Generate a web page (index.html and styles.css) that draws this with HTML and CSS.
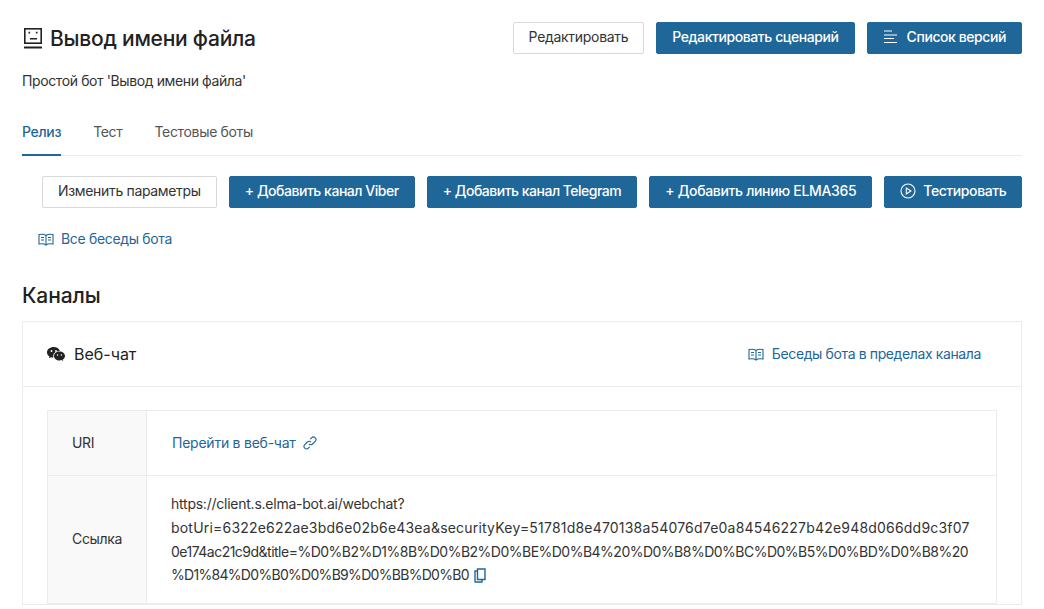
FILE: index.html
```html
<!DOCTYPE html>
<html lang="ru">
<head>
<meta charset="utf-8">
<title>Вывод имени файла</title>
<link rel="stylesheet" href="styles.css">
</head>
<body>
<main class="page">
  <header class="head">
    <h1 class="title">
      <svg class="bot" width="20" height="22" viewBox="0 0 20 22" fill="none" stroke="#222" stroke-width="1.6">
        <rect x="2.800" y="1.800" width="16.400" height="14.400"/>
        <path d="M2 20.500h18" stroke-width="2"/>
        <path d="M7.300 4.800v1.800M14.700 4.800v1.800M8 11.700h7" stroke-width="1.600"/>
      </svg>
      Вывод имени файла
    </h1>
    <div class="head-actions">
      <button class="btn btn-light ls-a">Редактировать</button>
      <button class="btn btn-blue ls-b">Редактировать сценарий</button>
      <button class="btn btn-blue ls-b">
        <svg class="ic" width="15" height="14" viewBox="0 0 15 14" stroke="#fff" stroke-width="1.100" fill="none"><path d="M1 1h8M1 5h13M1 8.500h10M1 12.500h13"/></svg>
        Список версий
      </button>
    </div>
  </header>
  <p class="desc">Простой бот 'Вывод имени файла'</p>
  <nav class="tabs">
    <a class="tab active">Релиз</a>
    <a class="tab">Тест</a>
    <a class="tab">Тестовые боты</a>
  </nav>
  <div class="actions">
    <button class="btn btn-light ls-c">Изменить параметры</button>
    <button class="btn btn-blue ls-d">+ Добавить канал Viber</button>
    <button class="btn btn-blue ls-e">+ Добавить канал Telegram</button>
    <button class="btn btn-blue ls-c">+ Добавить линию ELMA365</button>
    <button class="btn btn-blue ls-b tight">
      <svg class="ic" width="16" height="16" viewBox="0 0 16 16" stroke="#fff" stroke-width="1.100" fill="none"><circle cx="8" cy="8" r="7"/><path d="M6.300 5v6l4.600-3z"/></svg>
      Тестировать
    </button>
  </div>
  <a class="link all-link">
    <svg width="16" height="13" viewBox="0 0 16 13" stroke="#1f6699" stroke-width="1.100" fill="none"><path d="M8 2.500C6.500 1.200 3 1.200 1 1.500v9.500c2-.3 5.500-.3 7 1 1.500-1.300 5-1.300 7-1V1.500C13 1.200 9.500 1.200 8 2.500zM8 2.500V12M3 4.500h3M3 7h3M10 4.500h3M10 7h3"/></svg>
    Все беседы бота
  </a>
  <h2 class="section">Каналы</h2>
  <section class="card">
    <div class="card-head">
      <div class="card-title">
        <svg width="18" height="15" viewBox="0 0 18 15" fill="#222"><path d="M6.800 0C3 0 0 2.400 0 5.400c0 1.700 1 3.100 2.500 4.100L1.900 11.300l2.200-1.100c.8.200 1.600.3 2.400.3-.2-.5-.3-1-.3-1.500 0-2.900 2.700-5.100 6-5.100h.6C12.100 1.600 9.700 0 6.800 0z"/><path d="M18 8.900c0-2.500-2.500-4.500-5.500-4.500S7 6.400 7 8.900s2.500 4.500 5.500 4.500c.6 0 1.300-.1 1.900-.3l1.800 1-.5-1.500C17.100 11.700 18 10.400 18 8.900z"/><circle cx="4.500" cy="4" r=".9" fill="#fff"/><circle cx="9" cy="4" r=".9" fill="#fff"/><circle cx="10.600" cy="8" r=".7" fill="#fff"/><circle cx="14.400" cy="8" r=".7" fill="#fff"/></svg>
        Веб-чат
      </div>
      <a class="link channel-link">
        <svg width="16" height="13" viewBox="0 0 16 13" stroke="#1f6699" stroke-width="1.100" fill="none"><path d="M8 2.500C6.500 1.200 3 1.200 1 1.500v9.500c2-.3 5.500-.3 7 1 1.500-1.300 5-1.300 7-1V1.500C13 1.200 9.500 1.200 8 2.500zM8 2.500V12M3 4.500h3M3 7h3M10 4.500h3M10 7h3"/></svg>
        Беседы бота в пределах канала
      </a>
    </div>
    <div class="card-body">
      <div class="table">
        <div class="row row-uri">
          <div class="label">URI</div>
          <div class="value"><a class="link uri-link">Перейти в веб-чат
            <svg width="14" height="14" viewBox="0 0 14 14" stroke="#1f6699" stroke-width="1.100" fill="none"><path d="M6 8a2.500 2.500 0 0 0 3.600 0l2.600-2.600a2.500 2.500 0 0 0-3.600-3.600L7.300 3.100M8 6a2.500 2.500 0 0 0-3.600 0L1.800 8.600a2.500 2.500 0 0 0 3.600 3.600l1.300-1.300"/></svg></a></div>
        </div>
        <div class="row">
          <div class="label">Ссылка</div>
          <div class="value url">
            <span class="url-line l1">https://client.s.elma-bot.ai/webchat?</span>
            <span class="url-line l2">botUri=6322e622ae3bd6e02b6e43ea&amp;securityKey=51781d8e470138a54076d7e0a84546227b42e948d066dd9c3f07</span>
            <span class="url-line l3">0e174ac21c9d&amp;title=%D0%B2%D1%8B%D0%B2%D0%BE%D0%B4%20%D0%B8%D0%BC%D0%B5%D0%BD%D0%B8%20</span>
            <span class="url-line l4">%D1%84%D0%B0%D0%B9%D0%BB%D0%B0 <svg class="copy" width="12" height="15" viewBox="0 0 12 15" stroke="#1f6699" stroke-width="1.400" fill="none"><path d="M3.500 1h7.500v10.500H3.500zM3.500 3H1v10.500c0 .3.200.5.500.5H8v-2.500"/></svg></span>
          </div>
        </div>
      </div>
    </div>
  </section>
</main>
</body>
</html>
```
FILE: styles.css
```css
* { box-sizing: border-box; }
html, body { margin: 0; padding: 0; height: 609px; overflow: hidden; background: #fff; }
body { font-family: Inter, "Liberation Sans", sans-serif; font-size: 14px; color: #333; letter-spacing: -0.33px; }
.page { padding: 22px 22px 0; }
.head { display: flex; justify-content: space-between; align-items: flex-start; height: 32px; }
.title { margin: 0; font-size: 21px; font-weight: 500; line-height: 34px; color: #222; display: flex; align-items: center; gap: 8px; letter-spacing: -0.24px; }
.bot { display: block; margin-top: -2px; }
.head-actions { display: flex; gap: 12px; }
.btn { height: 32px; padding: 0 15px 2px; border-radius: 2px; font: inherit; font-size: 14px; line-height: 28px; border: 1px solid #1f6699; display: inline-flex; align-items: center; gap: 9px; white-space: nowrap; }
.btn-light { background: #fff; border-color: #d9d9d9; color: #333; }
.btn-blue { background: #1f6699; color: #fff; font-weight: 500; }
.tight { gap: 7px; }
.ls-a { letter-spacing: -0.3px; }
.ls-b { letter-spacing: -0.42px; }
.ls-c { letter-spacing: -0.33px; }
.ls-d { letter-spacing: -0.47px; }
.ls-e { letter-spacing: -0.5px; }
.ic { display: block; }
.desc { margin: 18px 0 0; font-size: 14px; line-height: 18px; color: #333; letter-spacing: -0.39px; }
.tabs { display: flex; gap: 32px; margin-top: 26px; border-bottom: 1px solid #ececec; height: 40px; }
.tab { font-size: 14px; line-height: 20px; padding-top: 6px; height: 40px; color: #555; }
.tab.active { color: #1f6699; font-weight: 500; border-bottom: 2px solid #1f6699; }
.actions { display: flex; gap: 12px; margin-top: 20px; padding-left: 20px; }
.link { color: #1f6699; display: inline-flex; align-items: center; gap: 8px; line-height: 20px; }
.all-link { margin: 21px 0 0 16px; gap: 7px; }
.channel-link { letter-spacing: -0.38px; }
.section { margin: 33px 0 0; font-size: 21px; font-weight: 500; line-height: 28px; color: #222; letter-spacing: -0.1px; }
.card { margin-top: 11px; border: 1px solid #ececec; }
.card-head { height: 65px; padding: 0 40px 0 24px; display: flex; align-items: center; justify-content: space-between; border-bottom: 1px solid #ececec; }
.card-title { display: flex; align-items: center; gap: 9px; font-size: 16px; font-weight: 400; color: #222; letter-spacing: 0; }
.card-body { padding: 23px 24px 0; }
.table { border: 1px solid #ececec; }
.row { display: flex; }
.row-uri { border-bottom: 1px solid #ececec; height: 65px; }
.label { flex: 0 0 99px; background: #f9f9f9; border-right: 1px solid #ececec; padding: 0 0 2px 24px; display: flex; align-items: center; color: #333; }
.value { flex: 1; padding: 0 24px; display: flex; align-items: center; }
.uri-link { padding-left: 1px; gap: 7px; letter-spacing: -0.24px; }
.url { display: block; padding: 16px 24px 16px; line-height: 24px; color: #333; }
.url-line { display: block; white-space: nowrap; height: 24px; }
.l1 { letter-spacing: -0.24px; }
.l2 { letter-spacing: 0.2px; }
.l3 { letter-spacing: -0.51px; }
.l4 { letter-spacing: -0.7px; margin-top: -1px; }
.copy { vertical-align: -3px; margin-left: 2px; }
```
